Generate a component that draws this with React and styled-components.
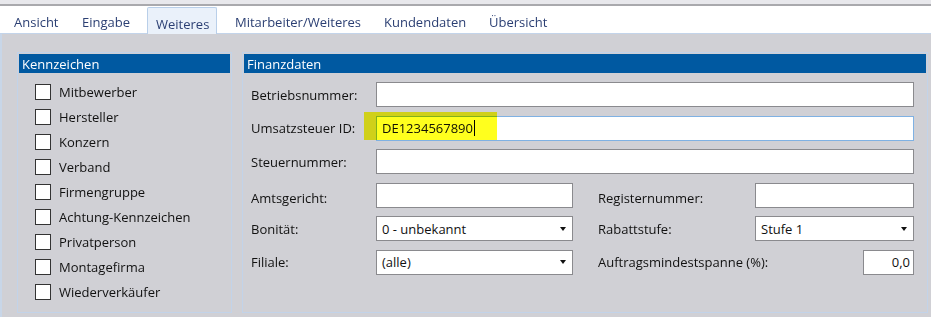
import React from "react";
import styled, { createGlobalStyle } from "styled-components";

const GlobalStyle = createGlobalStyle`
  html, body {
    margin: 0;
    padding: 0;
    background: #d0d0d5;
  }
  body {
    font-family: "Open Sans", "Liberation Sans", Arial, sans-serif;
    font-size: 13px;
    color: #111111;
  }
`;

const tabs = [
  { label: "Ansicht", width: 68 },
  { label: "Eingabe", width: 73 },
  { label: "Weiteres", width: 70, active: true },
  { label: "Mitarbeiter/Weiteres", width: 149 },
  { label: "Kundendaten", width: 105 },
  { label: "Übersicht", width: 80 },
];

const flags = [
  "Mitbewerber",
  "Hersteller",
  "Konzern",
  "Verband",
  "Firmengruppe",
  "Achtung-Kennzeichen",
  "Privatperson",
  "Montagefirma",
  "Wiederverkäufer",
];

export default function App() {
  return (
    <Page>
      <GlobalStyle />
      <TopStrip />
      <TabStrip>
        {tabs.map((t) => (
          <Tab key={t.label} $width={t.width} $active={t.active}>
            {t.label}
          </Tab>
        ))}
      </TabStrip>

      <Content>
        <GroupBox $width={215}>
          <GroupHeader>Kennzeichen</GroupHeader>
          <CheckList>
            {flags.map((f) => (
              <CheckRow key={f}>
                <CheckBox />
                <span>{f}</span>
              </CheckRow>
            ))}
          </CheckList>
        </GroupBox>

        <GroupBox>
          <GroupHeader>Finanzdaten</GroupHeader>
          <Form>
            <Label>Betriebsnummer:</Label>
            <TextBox $span={3} />

            <Label>Umsatzsteuer ID:</Label>
            <Marked $span={3}>
              <TextBox $focused>
                DE1234567890
                <Caret />
              </TextBox>
              <Highlight />
            </Marked>

            <Label>Steuernummer:</Label>
            <TextBox $span={3} />

            <Label $drop>Amtsgericht:</Label>
            <TextBox />
            <Label $drop $indent>
              Registernummer:
            </Label>
            <TextBox />

            <Label>Bonität:</Label>
            <Combo>
              0 - unbekannt
              <Arrow />
            </Combo>
            <Label $indent>Rabattstufe:</Label>
            <Combo>
              Stufe 1
              <Arrow />
            </Combo>

            <Label>Filiale:</Label>
            <Combo>
              (alle)
              <Arrow />
            </Combo>
            <Label $indent>Auftragsmindestspanne (%):</Label>
            <NumberBox>0,0</NumberBox>
          </Form>
        </GroupBox>
      </Content>
    </Page>
  );
}

const Page = styled.div`
  width: 931px;
  height: 317px;
  display: flex;
  flex-direction: column;
  overflow: hidden;
  background: #d0d0d5;
`;

const TopStrip = styled.div`
  height: 4px;
  background: #e8e8ec;
  border-bottom: 2px solid #a9a9ad;
`;

const TabStrip = styled.div`
  height: 27px;
  background: #ffffff;
  border-bottom: 1px solid #c3d4ea;
  display: flex;
  align-items: flex-end;
  padding-left: 6px;
`;

const Tab = styled.div`
  width: ${(p) => p.$width}px;
  height: ${(p) => (p.$active ? 27 : 25)}px;
  box-sizing: border-box;
  padding: ${(p) => (p.$active ? 5 : 3)}px 0 0 8px;
  display: flex;
  align-items: center;
  color: #2b3f73;
  white-space: nowrap;
  margin-bottom: ${(p) => (p.$active ? -1 : 0)}px;
  margin-right: ${(p) => (p.$active ? 10 : 0)}px;
  background: ${(p) => (p.$active ? "#eaf1fa" : "transparent")};
  border: ${(p) => (p.$active ? "1px solid #b9cfe9" : "none")};
  border-bottom: none;
  border-radius: 2px 2px 0 0;
`;

const Content = styled.div`
  flex: 1;
  display: flex;
  gap: 10px;
  padding: 18px 3px 4px 15px;
  border-left: 2px solid #c8d6e8;
  box-sizing: border-box;
`;

const GroupBox = styled.div`
  ${(p) => (p.$width ? `width: ${p.$width}px;` : "flex: 1;")}
  box-sizing: border-box;
  border: 1px solid #c2d3e9;
  padding: 1px;
  display: flex;
  flex-direction: column;
`;

const GroupHeader = styled.div`
  height: 19px;
  background: #0059a1;
  color: #ffffff;
  padding-left: 3px;
  display: flex;
  align-items: center;
`;

const CheckList = styled.div`
  display: flex;
  flex-direction: column;
  gap: 9px;
  padding: 11px 0 0 16px;
`;

const CheckRow = styled.div`
  display: flex;
  align-items: center;
  gap: 8px;
  height: 16px;
`;

const CheckBox = styled.span`
  width: 16px;
  height: 16px;
  box-sizing: border-box;
  background: #ffffff;
  border: 1px solid #333333;
`;

const Form = styled.div`
  display: grid;
  grid-template-columns: 125px 197px 182px 159px;
  grid-auto-rows: 25px;
  row-gap: 8.5px;
  padding: 9px 0 0 7px;
`;

const Label = styled.div`
  grid-column: span ${(p) => p.$span || 1};
  display: flex;
  align-items: center;
  padding-top: ${(p) => (p.$drop ? 5 : 0)}px;
  padding-left: ${(p) => (p.$indent ? 25 : 0)}px;
  white-space: nowrap;
`;

const TextBox = styled.div`
  grid-column: span ${(p) => p.$span || 1};
  position: relative;
  box-sizing: border-box;
  height: 25px;
  background: #ffffff;
  border: 1px solid ${(p) => (p.$focused ? "#7fb1e3" : "#8a8a8e")};
  display: flex;
  align-items: center;
  padding-left: 5px;
`;

const Marked = styled.div`
  grid-column: span ${(p) => p.$span || 1};
  position: relative;
`;

const Highlight = styled.div`
  position: absolute;
  left: -12px;
  top: -4px;
  width: 133px;
  height: 28px;
  background: #ffff1e;
  mix-blend-mode: multiply;
  pointer-events: none;
`;

const Caret = styled.span`
  display: inline-block;
  width: 1px;
  height: 16px;
  background: #000000;
  margin-left: 1px;
`;

const Combo = styled(TextBox)`
  justify-content: space-between;
  padding-right: 6px;
`;

const Arrow = styled.span`
  width: 0;
  height: 0;
  border-left: 3.5px solid transparent;
  border-right: 3.5px solid transparent;
  border-top: 4px solid #111111;
`;

const NumberBox = styled(TextBox)`
  width: 51px;
  justify-self: end;
  justify-content: flex-end;
  padding: 0 3px 0 0;
`;
